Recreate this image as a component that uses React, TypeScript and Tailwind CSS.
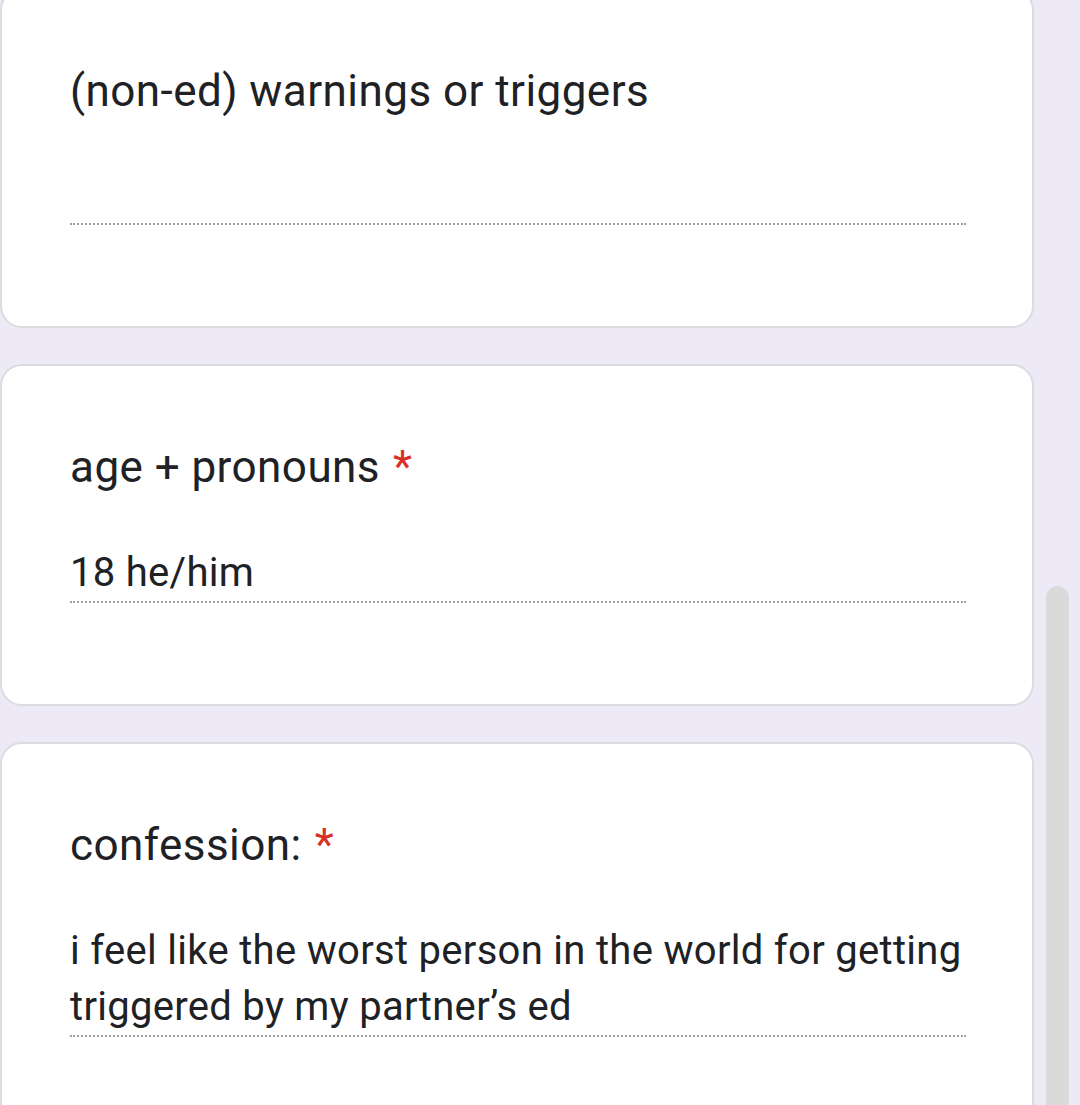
import React from 'react';

type Question = {
  title: string;
  required?: boolean;
  answer?: string;
};

const questions: Question[] = [
  { title: '(non-ed) warnings or triggers' },
  { title: 'age + pronouns', required: true, answer: '18 he/him' },
  {
    title: 'confession:',
    required: true,
    answer: 'i feel like the worst person in the world for getting triggered by my partner\u2019s ed',
  },
];

function QuestionCard({ q, first }: { q: Question; first?: boolean }) {
  return (
    <div
      className={
        'bg-white border-2 border-[#dadce0] rounded-[22px] pl-[68px] pr-[66px] pt-[73px] pb-[101px] ' +
        (first ? '-mt-[12px]' : '')
      }
    >
      <div className="text-[44px] leading-[56px] tracking-[0.45px] text-[#202124]">
        {q.title}
        {q.required && <span className="text-[#d93025] ml-[13px]">*</span>}
      </div>
      <div
        className={
          'min-h-[58px] border-b-2 border-dotted border-[#a0a0a0] text-[40px] leading-[56px] tracking-[0.3px] text-[#202124] ' +
          (first ? 'mt-[48px]' : 'mt-[50px]')
        }
      >
        {q.answer}
      </div>
    </div>
  );
}

export default function App() {
  return (
    <div
      className="h-[1105px] overflow-hidden bg-[#eee9f7] flex"
      style={{ fontFamily: 'Roboto, "Noto Sans", sans-serif' }}
    >
      <div className="w-[1034px] flex flex-col gap-[36px]">
        {questions.map((q, i) => (
          <QuestionCard key={q.title} q={q} first={i === 0} />
        ))}
      </div>
      <div className="flex-1 pl-[12px] pt-[586px]">
        <div className="w-[23px] h-[600px] rounded-full bg-[#dadada]" />
      </div>
    </div>
  );
}
